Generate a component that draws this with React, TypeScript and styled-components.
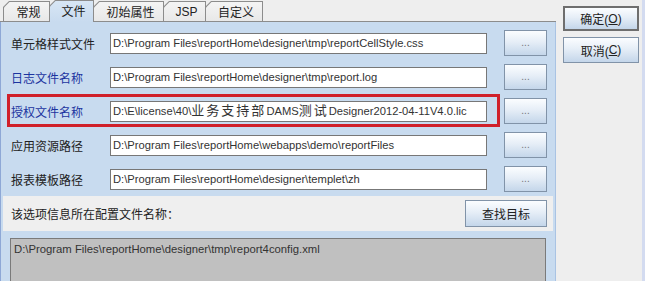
import React from "react";
import styled, { createGlobalStyle } from "styled-components";

const Global = createGlobalStyle`
  html, body { margin: 0; padding: 0; background: #eeeeee; }
  body { font-family: "Liberation Sans", "Noto Sans CJK SC", sans-serif; font-size: 12px; color: #222; }
  * { box-sizing: border-box; }
`;

const Root = styled.div`
  display: flex;
  width: 645px;
  height: 281px;
  overflow: hidden;
  background: #eeeeee;
  border-right: 3px solid #d3dbf0;
`;

const TabPane = styled.div`
  width: 556px;
  flex: none;
  display: flex;
  flex-direction: column;
`;

const TabStrip = styled.div`
  position: relative;
  display: flex;
  align-items: flex-end;
  height: 23px;
  padding-left: 3px;
  border-bottom: 1px solid #8c8c8c;
`;

const Tab = styled.div<{ $active?: boolean; $w: number }>`
  position: relative;
  width: ${(p) => p.$w}px;
  height: ${(p) => (p.$active ? 22 : 20)}px;
  margin-left: -1px;
  margin-bottom: ${(p) => (p.$active ? -1 : 0)}px;
  z-index: ${(p) => (p.$active ? 2 : 1)};
  padding: 1px 1px 0 1px;
  background: #8c8c8c;
  clip-path: polygon(6px 0, 100% 0, 100% 100%, 0 100%, 0 6px);
  &:first-child { margin-left: 0; }
`;

const TabFace = styled.div<{ $active?: boolean }>`
  height: 100%;
  display: flex;
  align-items: center;
  justify-content: center;
  padding-left: 4px;
  padding-bottom: ${(p) => (p.$active ? 2 : 0)}px;
  font-size: 12px;
  color: #222;
  background: ${(p) =>
    p.$active ? "linear-gradient(#d8e6f5, #c8dbef)" : "linear-gradient(#f4f4f4, #e8e8e8)"};
  clip-path: polygon(5.5px 0, 100% 0, 100% 100%, 0 100%, 0 5.5px);
`;

const Panel = styled.div`
  flex: 1;
  display: flex;
  flex-direction: column;
  padding-top: 4px;
  background: #c8dbef;
  border-left: 1px solid #8ea8d6;
  border-right: 1px solid #a9c3e3;
`;

const Row = styled.div`
  position: relative;
  display: flex;
  align-items: center;
  height: 34px;
  padding-left: 10px;
`;

const Label = styled.div<{ $blue?: boolean }>`
  width: 99px;
  flex: none;
  color: ${(p) => (p.$blue ? "#1c34a0" : "#222")};
  white-space: nowrap;
`;

const Field = styled.div`
  width: 377px;
  height: 21px;
  flex: none;
  border: 1px solid #777;
  background: #fff;
  padding-left: 2px;
  font-size: 11.2px;
  line-height: 19px;
  white-space: nowrap;
  overflow: hidden;
  color: #333;
`;

const Wide = styled.span`
  font-size: 13px;
  letter-spacing: 2px;
  line-height: 17px;
`;

const Button = styled.button<{ $w: number; $h: number; $default?: boolean }>`
  width: ${(p) => p.$w}px;
  height: ${(p) => p.$h}px;
  flex: none;
  padding: 0;
  font-family: "Liberation Sans", "Noto Sans CJK SC", sans-serif;
  font-size: 12px;
  color: #222;
  border: ${(p) => (p.$default ? "2px solid #6e6e6e" : "1px solid #8193a8")};
  border-radius: 0;
  background: linear-gradient(#fbfdff 0%, #e6eef7 45%, #c4d6ea 100%);
  display: flex;
  align-items: center;
  justify-content: center;
`;

const DotsButton = styled(Button)`
  margin-left: 17px;
  color: #777;
  font-size: 10px;
  padding-bottom: 2px;
`;

const Highlight = styled.div`
  position: absolute;
  left: 6px;
  top: 0;
  width: 493px;
  height: 33px;
  border: 3px solid #d0202a;
  pointer-events: none;
`;

const FindBar = styled.div`
  display: flex;
  align-items: center;
  justify-content: space-between;
  height: 35px;
  margin: 0 2px;
  padding: 0 6px 0 8px;
  background: #efefef;
`;

const Bottom = styled.div`
  flex: 1;
  padding: 7px 9px 0 9px;
`;

const ConfigBox = styled.div`
  height: 60px;
  background: #c0c0c0;
  border: 1px solid #7a7a7a;
  padding: 4px 3px;
  font-size: 11.3px;
  color: #333;
  white-space: nowrap;
`;

const Sidebar = styled.div`
  flex: 1;
  display: flex;
  flex-direction: column;
  gap: 6px;
  padding: 6px 0 0 7px;
`;

const U = styled.span`
  text-decoration: underline;
`;

function Mixed({ text }: { text: string }) {
  const parts = text.split(/([\u4e00-\u9fff]+)/).filter(Boolean);
  return (
    <>
      {parts.map((p, i) =>
        /[\u4e00-\u9fff]/.test(p) ? <Wide key={i}>{p}</Wide> : <React.Fragment key={i}>{p}</React.Fragment>
      )}
    </>
  );
}

const rows = [
  { label: "单元格样式文件", value: "D:\\Program Files\\reportHome\\designer\\tmp\\reportCellStyle.css" },
  { label: "日志文件名称", value: "D:\\Program Files\\reportHome\\designer\\tmp\\report.log", blue: true },
  { label: "授权文件名称", value: "D:\\E\\license\\40\\业务支持部DAMS测试Designer2012-04-11V4.0.lic", blue: true, mark: true },
  { label: "应用资源路径", value: "D:\\Program Files\\reportHome\\webapps\\demo\\reportFiles" },
  { label: "报表模板路径", value: "D:\\Program Files\\reportHome\\designer\\templet\\zh" },
];

const tabs = [
  { t: "常规", w: 47 },
  { t: "文件", w: 45, active: true },
  { t: "初始属性", w: 71 },
  { t: "JSP", w: 43 },
  { t: "自定义", w: 58 },
];

export default function App() {
  return (
    <>
      <Global />
      <Root>
        <TabPane>
          <TabStrip>
            {tabs.map((t) => (
              <Tab key={t.t} $w={t.w} $active={t.active}>
                <TabFace $active={t.active}>{t.t}</TabFace>
              </Tab>
            ))}
          </TabStrip>
          <Panel>
            {rows.map((r) => (
              <Row key={r.label}>
                <Label $blue={r.blue}>{r.label}</Label>
                <Field>
                  <Mixed text={r.value} />
                </Field>
                <DotsButton $w={43} $h={26}>...</DotsButton>
                {r.mark && <Highlight />}
              </Row>
            ))}
            <FindBar>
              <span>该选项信息所在配置文件名称：</span>
              <Button $w={82} $h={27}>查找目标</Button>
            </FindBar>
            <Bottom>
              <ConfigBox>D:\Program Files\reportHome\designer\tmp\report4config.xml</ConfigBox>
            </Bottom>
          </Panel>
        </TabPane>
        <Sidebar>
          <Button $w={76} $h={25} $default>
            确定(<U>O</U>)
          </Button>
          <Button $w={76} $h={26}>
            取消(<U>C</U>)
          </Button>
        </Sidebar>
      </Root>
    </>
  );
}
